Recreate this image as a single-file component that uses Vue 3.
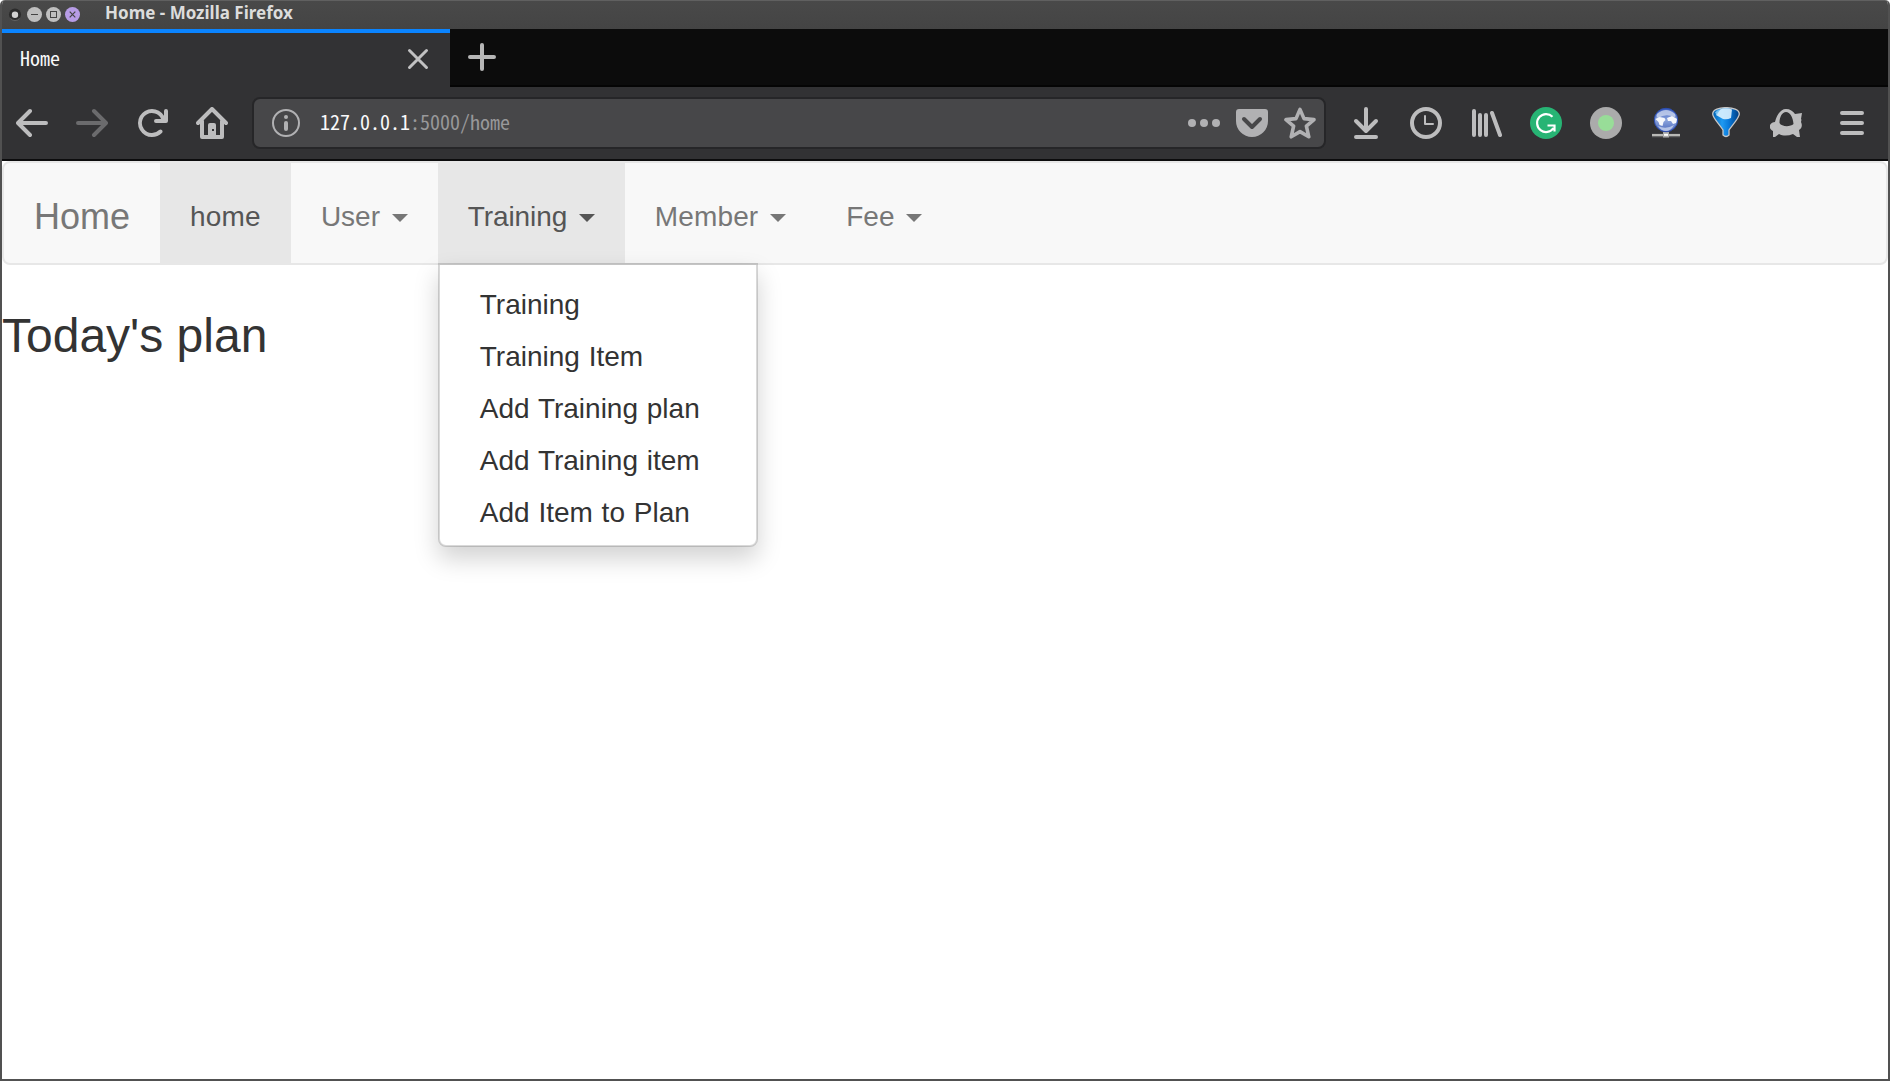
<script setup>
const menus = [
  { label: 'User', open: false },
  {
    label: 'Training',
    open: true,
    items: ['Training', 'Training Item', 'Add Training plan', 'Add Training item', 'Add Item to Plan'],
  },
  { label: 'Member', open: false },
  { label: 'Fee', open: false },
]
</script>

<template>
  <div class="window">
    <header class="titlebar">
      <svg class="controls" width="84" height="28" viewBox="0 0 84 28">
        <circle cx="15" cy="14.5" r="6" fill="#2b2b2b" />
        <path d="M10.5 18.5a6 6 0 0 0 9 0" fill="none" stroke="#626262" stroke-width="1" />
        <circle cx="15" cy="14.7" r="3.2" fill="#d0d0d0" />
        <circle cx="34.5" cy="14.5" r="7.5" fill="#bfbfbf" />
        <path d="M31 14.5h7" stroke="#444" stroke-width="1.2" />
        <circle cx="53.5" cy="14.5" r="7.5" fill="#bfbfbf" />
        <rect x="50.5" y="11.5" width="6" height="6" fill="none" stroke="#444" stroke-width="1" />
        <circle cx="72.5" cy="14.5" r="7.5" fill="#b79ce6" />
        <path d="M69.7 11.7l5.6 5.6M75.3 11.7l-5.6 5.6" stroke="#444" stroke-width="1.2" />
      </svg>
      <span class="title">Home - Mozilla Firefox</span>
    </header>

    <div class="tabs">
      <div class="tab">
        <span class="mono">Home</span>
        <svg width="24" height="24" viewBox="0 0 24 24">
          <path d="M3.5 3.5l17 17M20.5 3.5l-17 17" stroke="#c1c1c2" stroke-width="3" stroke-linecap="round" />
        </svg>
      </div>
      <svg class="plus" width="32" height="32" viewBox="0 0 32 32">
        <path d="M16 4v24M4 16h24" stroke="#b6b6b6" stroke-width="4" stroke-linecap="round" />
      </svg>
    </div>

    <div class="toolbar">
      <span class="tool">
        <svg viewBox="0 0 16 16"><path d="M7 2L1 8l6 6M1.5 8H15" class="line" /></svg>
      </span>
      <span class="tool dim">
        <svg viewBox="0 0 16 16"><path d="M9 2l6 6-6 6M14.5 8H1" class="line" /></svg>
      </span>
      <span class="tool">
        <svg viewBox="0 0 16 16">
          <path fill="currentColor" d="M15 1a1 1 0 0 0-1 1v2.418A6.995 6.995 0 1 0 8 15a6.954 6.954 0 0 0 4.95-2.05 1 1 0 0 0-1.414-1.414A5.019 5.019 0 1 1 12.549 6H10a1 1 0 0 0 0 2h5a1 1 0 0 0 1-1V2a1 1 0 0 0-1-1z" />
        </svg>
      </span>
      <span class="tool">
        <svg viewBox="0 0 16 16">
          <path d="M1 8l7-7 7 7M3 7v8h10V7" class="line" />
          <path fill="currentColor" d="M6 15.5V9a1 1 0 0 1 1-1h2a1 1 0 0 1 1 1v6.500z" />
          <rect x="8" y="11" width="1" height="1" fill="#323234" />
        </svg>
      </span>

      <div class="urlbar">
        <svg class="info" viewBox="0 0 28 28">
          <circle cx="14" cy="14" r="13" fill="none" stroke="currentColor" stroke-width="2" />
          <circle cx="14" cy="8" r="2" fill="currentColor" />
          <path d="M14 14v6" stroke="currentColor" stroke-width="4" stroke-linecap="round" />
        </svg>
        <span class="mono url"><b>127.0.0.1</b>:5000/home</span>
        <span class="page-actions">
          <svg viewBox="0 0 16 16" fill="currentColor">
            <circle cx="2" cy="8" r="2" /><circle cx="8" cy="8" r="2" /><circle cx="14" cy="8" r="2" />
          </svg>
          <svg viewBox="0 0 16 16">
            <path fill="currentColor" d="M1.500 1h13A1.500 1.500 0 0 1 16 2.500V7a8 8 0 0 1-16 0V2.500A1.500 1.500 0 0 1 1.500 1z" />
            <path d="M4 6l4 4 4-4" fill="none" stroke="#474749" stroke-width="2" stroke-linecap="round" stroke-linejoin="round" />
          </svg>
          <svg viewBox="0 0 16 16">
            <path d="M8 1.200l2 4.600 5 .5-3.800 3.300 1.200 5.300L8 12.300l-4.400 2.600 1.200-5.300L1 6.300l5-.5z" fill="none" stroke="currentColor" stroke-width="1.800" stroke-linejoin="round" />
          </svg>
        </span>
      </div>

      <span class="tool">
        <svg viewBox="0 0 16 16"><path d="M8 1v10M3 7l5 5 5-5M3 15h10" class="line" /></svg>
      </span>
      <span class="tool">
        <svg viewBox="0 0 16 16">
          <circle cx="8" cy="8" r="7" class="line" />
          <path d="M7.500 4.500v4h4" fill="none" stroke="currentColor" stroke-linecap="round" stroke-linejoin="round" />
        </svg>
      </span>
      <span class="tool">
        <svg viewBox="0 0 16 16"><path d="M2 2v12M5 4v10M8 4v10M11 3l4 11" class="line" /></svg>
      </span>
      <span class="tool">
        <svg viewBox="0 0 32 32">
          <circle cx="16" cy="16" r="16" fill="#27b474" />
          <path d="M22.500 9.700A9 9 0 1 0 23.500 21.200M17.500 18.500h7V24.500" fill="none" stroke="#fff" stroke-width="2.200" />
        </svg>
      </span>
      <span class="tool">
        <svg viewBox="0 0 32 32">
          <circle cx="16" cy="16" r="16" fill="#ababab" /><circle cx="16" cy="16" r="8" fill="#98dd98" />
        </svg>
      </span>
      <span class="tool">
        <svg viewBox="0 0 32 32">
          <defs>
            <linearGradient id="globe" x1="0" x2="0" y1="0" y2="1">
              <stop offset="0" stop-color="#3558bd" /><stop offset=".5" stop-color="#8ca5dc" />
              <stop offset="1" stop-color="#4a67bd" />
            </linearGradient>
          </defs>
          <path d="M2 28.500h28" stroke="#666" stroke-width="3.500" /><path d="M2 28h28" stroke="#d5d5d0" stroke-width="1.500" />
          <path d="M13 25h6v5.500h-6z" fill="#aaa" /><path d="M14 27.800h4" stroke="#fff" stroke-width="2" />
          <circle cx="16" cy="13" r="11.700" fill="url(#globe)" stroke="#2c4db0" />
          <path d="M7 7q9-8 18 0 1 3-1 3-8-4-16 1-2-1-1-4z" fill="#cbd6ee" opacity=".8" />
          <path d="M5.500 12l4-2 5 1 1 2-2 2-1 4-3-1-1-3zM17 11l5-2 5 3-1 4-3 1-2-3-3 0z" fill="#f5f7fc" />
          <path d="M8 19q8 4 16-1-3 6-8 6-5 0-8-5z" fill="#cbd6ee" opacity=".8" />
        </svg>
      </span>
      <span class="tool">
        <svg viewBox="0 0 32 32">
          <defs>
            <linearGradient id="funnel" x1="0" x2="1">
              <stop offset="0" stop-color="#0060b0" /><stop offset=".35" stop-color="#1f9af2" />
              <stop offset=".6" stop-color="#0a7bdc" /><stop offset="1" stop-color="#003d80" />
            </linearGradient>
          </defs>
          <path d="M2.700 7C2.700-1.500 29.300-1.500 29.300 7c0 4-7 11-10.300 16v5q-3 3-6 0v-5C10 18 2.700 11 2.700 7z" fill="url(#funnel)" stroke="#c7c7c7" stroke-width="1.300" />
          <path d="M10 2.500Q16 0 22 2.500L21 11q-4 2-8 1L6 8z" fill="#e3f5ff" opacity=".88" />
          <path d="M5 5.500q2-2.500 5-3L7 8z" fill="#8ed2fa" opacity=".8" />
        </svg>
      </span>
      <span class="tool">
        <svg viewBox="0 0 32 32">
          <path fill="currentColor" fill-rule="evenodd" d="M5 15C7 7 11 2 16 2c4 0 7 2 9 5l7-1-1 6c1 1 0 2 0 3 2 4 0 7-2 8l1 7h-3l-4-3c-5 2-10 2-14 0l-4 3-2 0 0-6c-2-1-4-3-3-6 1-2 3-3 5-3zM9.500 16c2 4 11 4 14 1C23 10 20 5 16 5c-4 0-6.500 5-6.500 11z" />
        </svg>
      </span>
      <span class="tool menu-button">
        <svg viewBox="0 0 16 16"><path d="M3 3h10M3 8h10M3 13h10" class="line" /></svg>
      </span>
    </div>

    <main class="page">
      <nav class="navbar">
        <a class="brand">Home</a>
        <a class="link current active">home</a>
        <div v-for="menu in menus" :key="menu.label" class="dropdown">
          <a class="link" :class="[menu.label.toLowerCase(), { active: menu.open }]">{{ menu.label }} <i class="caret"></i></a>
          <ul v-if="menu.open" class="menu">
            <li v-for="item in menu.items" :key="item">{{ item }}</li>
          </ul>
        </div>
      </nav>
      <h3>Today's plan</h3>
    </main>
  </div>
</template>

<style>
body {
  margin: 0;
  background: #fff;
}
</style>

<style scoped>
* {
  box-sizing: border-box;
}
.window {
  width: 1890px;
  height: 1081px;
  display: flex;
  flex-direction: column;
  overflow: hidden;
  border: solid #515151;
  border-width: 0 2px 2px;
  border-radius: 5px 5px 0 0;
  background: #fff;
}
.titlebar {
  height: 29px;
  flex: none;
  display: flex;
  align-items: flex-start;
  margin: 0 -2px;
  border-top: 1px solid #606060;
  background: linear-gradient(#494949, #444);
}
.controls {
  margin-top: -1px;
}
.title {
  margin-left: 21px;
  font: bold 17px/24px "Noto Sans", sans-serif;
  color: #dcdcdc;
}
.tabs {
  height: 58px;
  flex: none;
  display: flex;
  background: #0c0c0c;
  box-shadow: inset 0 -2px #050505;
}
.tab {
  width: 448px;
  display: flex;
  align-items: center;
  justify-content: space-between;
  padding: 0 20px 2px 18px;
  border-top: 4px solid #0a84ff;
  background: #323234;
  color: #f9f9fa;
}
.plus {
  margin: 12px 0 0 16px;
}
.mono {
  padding-bottom: 2px;
  font: 20px/28px "Noto Sans Mono CJK SC", "Noto Sans Mono CJK JP", "DejaVu Sans Mono", monospace;
}
.toolbar {
  height: 74px;
  flex: none;
  display: flex;
  align-items: center;
  border-bottom: 2px solid #0c0c0d;
  background: #323234;
  color: #bdbdbe;
}
.tool {
  width: 60px;
  display: flex;
  justify-content: center;
}
.tool svg,
.page-actions svg {
  width: 32px;
  height: 32px;
  display: block;
}
.dim {
  color: #6b6b6d;
}
.menu-button {
  width: 72px;
}
.line {
  fill: none;
  stroke: currentColor;
  stroke-width: 2;
  stroke-linecap: round;
  stroke-linejoin: round;
}
.urlbar {
  width: 1074px;
  height: 52px;
  margin: 0 10px;
  padding: 0 8px 0 18px;
  display: flex;
  align-items: center;
  border: 2px solid #262628;
  border-radius: 8px;
  background: #474749;
  color: #b1b1b3;
}
.info {
  width: 28px;
  height: 28px;
}
.url {
  margin-left: 20px;
  color: #98989a;
}
.url b {
  font-weight: normal;
  color: #f9f9fa;
}
.page-actions {
  display: flex;
  gap: 16px;
  margin-left: auto;
}
.page {
  flex: 1;
  font: 28px/40px "Liberation Sans", Arial, sans-serif;
  color: #333;
}
.navbar {
  height: 104px;
  display: flex;
  border: 2px solid #e7e7e7;
  border-radius: 8px;
  background: #f8f8f8;
}
.brand,
.link {
  display: block;
  height: 100px;
  padding: 34px 30px 26px;
  color: #777;
  white-space: nowrap;
}
.brand {
  font-size: 36px;
}
.link.active {
  background: #e7e7e7;
  color: #555;
}
.link.current {
  letter-spacing: 0.2px;
}
.link.training {
  letter-spacing: -0.1px;
}
.link.member {
  letter-spacing: 0.14px;
}
.dropdown {
  position: relative;
}
.caret {
  display: inline-block;
  margin-bottom: 2px;
  margin-left: 4px;
  vertical-align: middle;
  border: 8px solid transparent;
  border-top-color: currentColor;
  border-bottom: 0;
}
.menu {
  position: absolute;
  top: 100%;
  left: 0;
  width: 320px;
  margin: 0;
  padding: 10px 0;
  list-style: none;
  background: #fff;
  background-clip: padding-box;
  border: 2px solid rgba(0, 0, 0, 0.15);
  border-radius: 0 0 8px 8px;
  box-shadow: 0 12px 24px rgba(0, 0, 0, 0.175);
}
.menu li {
  padding: 10px 40px 2px;
  word-spacing: 1px;
}
h3 {
  margin: 45px 0 20px;
  font-size: 48px;
  font-weight: 500;
  line-height: 1.1;
}
</style>
